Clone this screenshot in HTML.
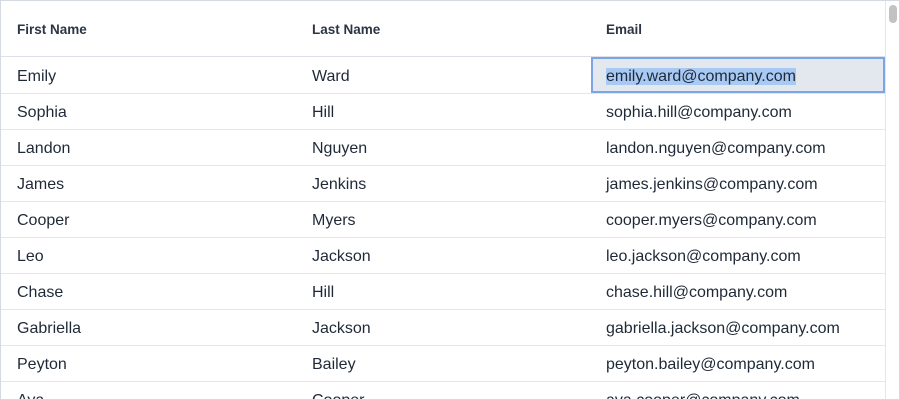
<!DOCTYPE html>
<html><head><style>
*{margin:0;padding:0;box-sizing:border-box}
body{width:900px;height:400px;overflow:hidden;background:#fff;font-family:"Liberation Sans",sans-serif;color:#1f2937}
.wrap{position:absolute;left:0;top:0;width:900px;height:400px;border:1px solid #d5d9e0;overflow:hidden}
.hdr{position:absolute;left:0;top:0;width:884px;height:56px;border-bottom:1px solid #dde1e7;font-size:13.5px;font-weight:bold;color:#2b3545}
.hdr span{position:absolute;top:21px}
.row{position:absolute;left:0;width:884px;height:36px;border-bottom:1px solid #e3e6eb;font-size:16px}
.row span{position:absolute;top:10px}
.c1{left:16px}.c2{left:311px}.c3{left:605px}
.sel{position:absolute;left:590px;top:56px;width:294px;height:36px;border:2px solid #7ea4e8;background:#e3e7ee}
.sb{position:absolute;left:884px;top:0;width:15px;height:400px;border-left:1px solid #e3e6eb;background:#fff}
.th{position:absolute;left:3px;top:4px;width:8px;height:18px;border-radius:4px;background:#c2c2c2}
</style></head><body><div class="wrap">
<div class="hdr"><span class="c1">First Name</span><span class="c2">Last Name</span><span class="c3">Email</span></div>
<div class="sel"></div>
<div class="row" style="top:57px"><span class="c1">Emily</span><span class="c2">Ward</span><span class="c3"><span style="position:static;background:#a9c9f5">emily.ward@company.com</span></span></div>
<div class="row" style="top:93px"><span class="c1">Sophia</span><span class="c2">Hill</span><span class="c3">sophia.hill@company.com</span></div>
<div class="row" style="top:129px"><span class="c1">Landon</span><span class="c2">Nguyen</span><span class="c3">landon.nguyen@company.com</span></div>
<div class="row" style="top:165px"><span class="c1">James</span><span class="c2">Jenkins</span><span class="c3">james.jenkins@company.com</span></div>
<div class="row" style="top:201px"><span class="c1">Cooper</span><span class="c2">Myers</span><span class="c3">cooper.myers@company.com</span></div>
<div class="row" style="top:237px"><span class="c1">Leo</span><span class="c2">Jackson</span><span class="c3">leo.jackson@company.com</span></div>
<div class="row" style="top:273px"><span class="c1">Chase</span><span class="c2">Hill</span><span class="c3">chase.hill@company.com</span></div>
<div class="row" style="top:309px"><span class="c1">Gabriella</span><span class="c2">Jackson</span><span class="c3">gabriella.jackson@company.com</span></div>
<div class="row" style="top:345px"><span class="c1">Peyton</span><span class="c2">Bailey</span><span class="c3">peyton.bailey@company.com</span></div>
<div class="row" style="top:381px"><span class="c1">Ava</span><span class="c2">Cooper</span><span class="c3">ava.cooper@company.com</span></div>
<div class="sb"><div class="th"></div></div>
</div></body></html>
